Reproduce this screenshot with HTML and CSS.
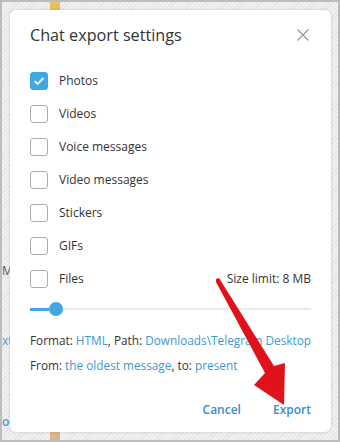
FILE: index.html
```html
<!DOCTYPE html>
<html lang="en">
<head>
    <meta charset="UTF-8">
    <title>Chat export settings</title>
    <link rel="stylesheet" href="styles.css">
</head>
<body>
    <div class="screen">
        <div class="backdrop__tab"></div>
        <div class="backdrop__text backdrop__text--m">M</div>
        <div class="backdrop__text backdrop__text--xt">xt</div>
        <div class="backdrop__text backdrop__text--oc">oc</div>
        <div class="backdrop__post"></div>

        <div class="dialog">
            <div class="dialog__head">
                <h1 class="dialog__title">Chat export settings</h1>
                <svg class="dialog__close" width="14" height="14" viewBox="0 0 14 14">
                    <path d="M1.5 1.5 L12.5 12.5 M12.5 1.5 L1.5 12.5" stroke="#9a9a9a" stroke-width="1.4" fill="none"/>
                </svg>
            </div>

            <ul class="options">
                <li class="option">
                    <span class="check check--on">
                        <svg width="12" height="10" viewBox="0 0 12 10"><path d="M1.5 5.2 L4.6 8 L10.5 2" stroke="#fff" stroke-width="1.8" fill="none"/></svg>
                    </span>
                    Photos
                </li>
                <li class="option"><span class="check"></span>Videos</li>
                <li class="option"><span class="check"></span>Voice messages</li>
                <li class="option"><span class="check"></span>Video messages</li>
                <li class="option"><span class="check"></span>Stickers</li>
                <li class="option"><span class="check"></span>GIFs</li>
                <li class="option">
                    <span class="check"></span>Files
                    <span class="option__limit">Size limit: 8 MB</span>
                </li>
            </ul>

            <div class="slider">
                <div class="slider__fill"></div>
                <div class="slider__thumb"></div>
                <div class="slider__rest"></div>
            </div>

            <p class="info">Format: <a>HTML</a>, Path: <a>Downloads\Telegram Desktop</a></p>
            <p class="info">From: <a>the oldest message</a>, to: <a>present</a></p>

            <div class="dialog__buttons">
                <button class="btn">Cancel</button>
                <button class="btn">Export</button>
            </div>
        </div>

        <svg class="arrow" width="340" height="442" viewBox="0 0 340 442">
            <path d="M214 277 L217 276 L272 364 L283 361 L282 403 L252 383 L263 371 L214 280 Z" fill="#e0121a"/>
        </svg>
    </div>
</body>
</html>
```

FILE: styles.css
```css
* {
    box-sizing: border-box;
}

body {
    margin: 0;
    font-family: 'Open Sans', sans-serif;
    color: #333;
}

.screen {
    position: relative;
    width: 340px;
    height: 442px;
    border: 2px solid #bdbdbd;
    padding: 8px 7px 8px 8px;
    overflow: hidden;
    background: repeating-linear-gradient(135deg, #e4e4e4 0, #e4e4e4 1px, #f1f1f1 1px, #f1f1f1 3px);
}

.backdrop__tab {
    position: absolute;
    left: 48px;
    top: 0;
    width: 10px;
    height: 8px;
    background: #e7c15e;
}

.backdrop__post {
    position: absolute;
    left: 48px;
    bottom: 0;
    width: 10px;
    height: 8px;
    background: #d9b58c;
}

.backdrop__text {
    position: absolute;
    left: 0;
    font-size: 12px;
    color: #555;
}

.backdrop__text--m { top: 260px; }
.backdrop__text--xt { top: 330px; color: #4a9fd3; }
.backdrop__text--oc { top: 411px; color: #4a9fd3; font-weight: 600; }

.dialog {
    position: relative;
    height: 100%;
    background: #fff;
    border-radius: 6px;
    box-shadow: 0 0 3px rgba(0, 0, 0, 0.18);
    padding: 13px 20px 13px 20px;
}

.dialog__head {
    display: flex;
    justify-content: space-between;
    align-items: center;
    height: 24px;
}

.dialog__title {
    margin: 0;
    font-size: 16.2px;
    font-weight: 400;
    color: #333;
}

.dialog__close {
    margin-right: 1px;
}

.options {
    list-style: none;
    margin: 17px 0 0;
    padding: 0;
}

.option {
    display: flex;
    align-items: center;
    height: 33px;
    font-size: 12px;
    color: #333;
}

.check {
    width: 18px;
    height: 18px;
    border: 1.5px solid #adadad;
    border-radius: 3px;
    margin-right: 11px;
    display: flex;
    align-items: center;
    justify-content: center;
}

.check--on {
    background: #40a7e3;
    border-color: #40a7e3;
}

.option__limit {
    margin-left: auto;
}

.slider {
    display: flex;
    align-items: center;
    height: 16px;
    margin-top: 6px;
}

.slider__fill {
    width: 19px;
    height: 3px;
    background: #40a7e3;
}

.slider__thumb {
    width: 14px;
    height: 14px;
    border-radius: 50%;
    background: #40a7e3;
}

.slider__rest {
    flex: 1;
    height: 2px;
    background: #e7e9ec;
}

.info {
    margin: 0;
    font-size: 11.8px;
    line-height: 25px;
    white-space: nowrap;
}

.info:first-of-type {
    margin-top: 11px;
}

.info a {
    color: #3d98d0;
}

.dialog__buttons {
    display: flex;
    justify-content: flex-end;
    gap: 32px;
    margin-top: 22px;
}

.btn {
    border: none;
    background: none;
    padding: 0;
    font-family: 'Open Sans', sans-serif;
    font-size: 12px;
    font-weight: 600;
    color: #3a8cc6;
    line-height: 20px;
}

.arrow {
    position: absolute;
    left: 0;
    top: 0;
    pointer-events: none;
}
```
